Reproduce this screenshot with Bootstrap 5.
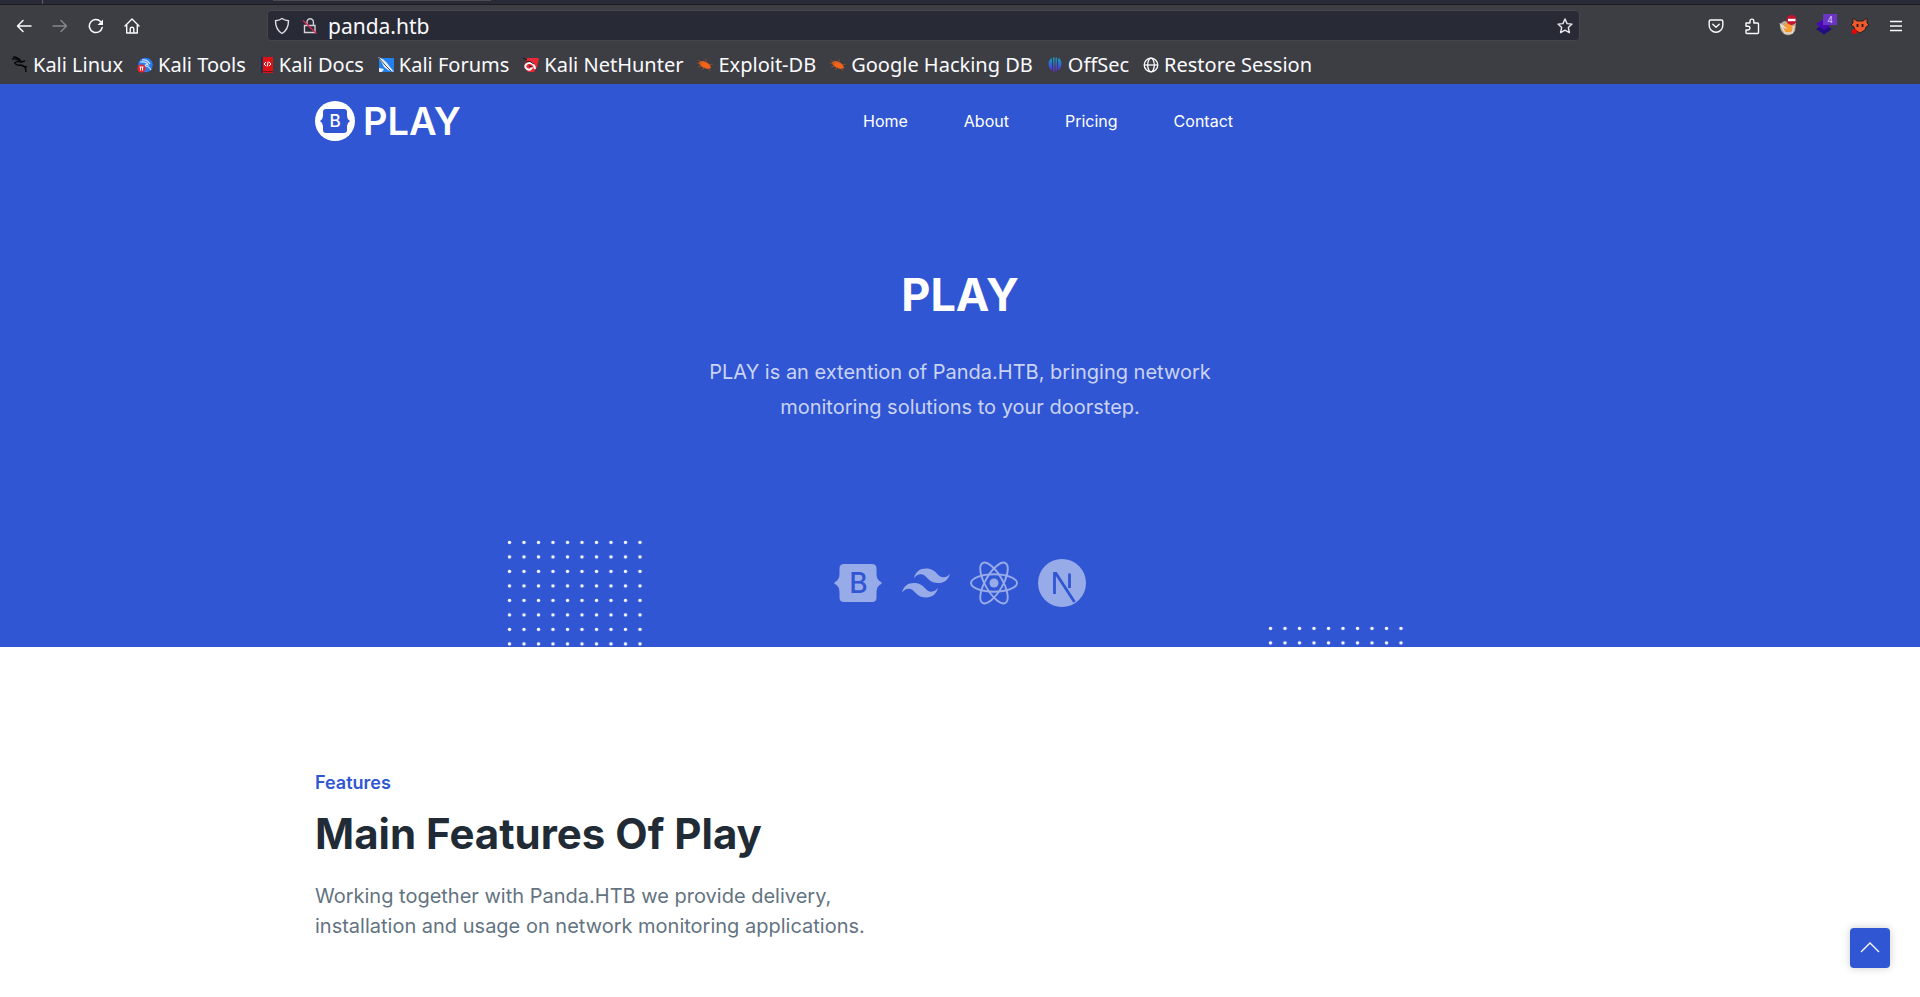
<!DOCTYPE html>
<html lang="en">
<head>
<meta charset="utf-8">
<meta name="viewport" content="width=device-width, initial-scale=1">
<title>Play</title>
<link href="https://cdn.jsdelivr.net/npm/bootstrap@5.3.0/dist/css/bootstrap.min.css" rel="stylesheet">
<style>
:root{--brand:#3056d3;--chrome:#3d3e43;--chrome-dark:#282a36;--ink:#212b36;--muted:#637381}
body{font-family:Inter,sans-serif;color:var(--ink);overflow-x:hidden}
a{text-decoration:none;color:inherit}
svg{display:block;flex:none}
/* browser chrome */
.chrome{background:var(--chrome);height:84px;font-family:"Noto Sans",sans-serif;color:#fbfbfe}
.tab-strip{height:5px;background:var(--chrome-dark);border-bottom:1px solid #1b1c22}
.tab-edge{width:43px;border-right:1px solid #5d5e68}
.tab-active{width:218px;height:1px;margin-left:230px;background:#4a4b52}
.toolbar{height:41px;padding:0 6px}
.tool{width:36px;height:36px;color:#fbfbfe;position:relative}
.tool:disabled{color:#86878b;opacity:1;border:0}
.url-box{margin:0 118px 0 117px;height:31px;background:var(--chrome-dark);border:1px solid #46474d;border-radius:4px;padding:0 6px;gap:12px}
.url-input{background:none;border:0;outline:0;color:#fbfbfe;font-size:21px;line-height:28px;padding:0;min-width:0}
.url-input,.url-box button{margin-left:-2px}
.count{position:absolute;left:16px;top:5px;width:14px;height:11px;background:#6a35c4;color:#e4d8fa;font-size:9px;line-height:11px;text-align:center}
.bookmarks{height:38px;padding:0 10px;gap:14px;font-size:20px;line-height:28px;white-space:nowrap}
.bookmarks a{gap:5px}
/* page */
.container{--bs-gutter-x:30px;max-width:1320px}
.row{--bs-gutter-x:30px}
.hero{background:var(--brand);color:#fff;height:563px;overflow:hidden;position:relative}
.site-nav{height:74px}
.site-nav nav{padding-left:13px}
.site-nav ul{gap:56px;font-size:16px;line-height:24px}
.brand-name{font-size:38px;line-height:40px;font-weight:600}
.hero h1{font-size:45px;line-height:56px;font-weight:700;margin:109px 0 32px}
.hero-text{font-size:20px;line-height:35px;color:rgba(255,255,255,.75);max-width:570px;margin-bottom:134px}
.tech{color:#98abe9;gap:20px}
.dots{position:absolute;color:#fff}
.dots-left{left:calc(50% - 453px);top:456px}
.dots-right{left:calc(50% + 308px);top:542px}
.features{padding-top:122px}
.features .kicker{font-size:18px;line-height:28px;font-weight:600;color:var(--brand);margin-bottom:12px}
.features h2{font-size:42px;line-height:50px;font-weight:700;margin-bottom:22px}
.features p{font-size:20px;line-height:30px;color:var(--muted);max-width:600px}
.to-top{position:fixed;right:30px;bottom:29px;width:40px;height:40px;background:var(--brand);color:#fff;border-radius:4px;box-shadow:0 0 8px rgba(0,0,0,.2)}
</style>
</head>
<body>
<svg width="0" height="0" class="position-absolute" aria-hidden="true">
  <defs>
    <pattern id="dot" width="14.5" height="14.5" patternUnits="userSpaceOnUse"><circle cx="2.5" cy="2.5" r="1.7" fill="#fff"/></pattern>
    <linearGradient id="off" x2="0" y2="1"><stop offset="0" stop-color="#12a3b8"/><stop offset=".6" stop-color="#3a56d8"/><stop offset="1" stop-color="#6a1fc0"/></linearGradient>
    <symbol id="bug" viewBox="0 0 16 16"><path d="M3 4.500l3-.5 4 1.500 3 2.500 1 3-3 1-4-1-3-2-2-2.500z" fill="#f2641a"/><path d="M0 6l5 1M1 10l4-1M5 13l3-3M13 14l-2-3M16 7l-4 1M9 2v4M1 3l5 3" stroke="#a85328" stroke-width=".7"/></symbol>
  </defs>
</svg>
<div class="chrome">
  <div class="tab-strip d-flex"><span class="tab-edge"></span><span class="tab-active"></span></div>
  <div class="toolbar d-flex align-items-center">
    <button class="tool btn p-0 d-flex align-items-center justify-content-center" aria-label="Back"><svg width="16" height="16" fill="none" stroke="currentColor" stroke-width="1.5" stroke-linecap="round" stroke-linejoin="round"><path d="M15 8H1.5M7 2.5L1.5 8 7 13.5"/></svg></button>
    <button class="tool btn p-0 d-flex align-items-center justify-content-center" aria-label="Forward" disabled><svg width="16" height="16" fill="none" stroke="currentColor" stroke-width="1.5" stroke-linecap="round" stroke-linejoin="round"><path d="M1 8h13.500M9 2.500L14.500 8 9 13.500"/></svg></button>
    <button class="tool btn p-0 d-flex align-items-center justify-content-center" aria-label="Reload"><svg width="16" height="16" fill="none" stroke="currentColor" stroke-width="1.5" stroke-linecap="round"><path d="M14.200 9.500A6.500 6.500 0 1 1 12.500 3.500"/><path d="M15 1.500V7H9.500z" fill="currentColor" stroke="none"/></svg></button>
    <button class="tool btn p-0 d-flex align-items-center justify-content-center" aria-label="Home"><svg width="16" height="16" fill="none" stroke="currentColor" stroke-width="1.400" stroke-linecap="round" stroke-linejoin="round"><path d="M1 8l7-7 7 7M2.700 7v8h10.600V7M6.200 15v-4a1.800 1.800 0 0 1 3.600 0v4"/></svg></button>
    <div class="url-box flex-grow-1 d-flex align-items-center">
      <svg width="16" height="18" fill="none" stroke="#e2e2e8" stroke-width="1.400" stroke-linejoin="round"><path d="M8 1.500C6 3 4 3.500 1.500 3.800 1.500 10 3 13.500 8 16.500c5-3 6.500-6.500 6.500-12.700C12 3.500 10 3 8 1.500z"/></svg>
      <svg width="16" height="16" fill="none" stroke="#d2d2d8" stroke-width="1.400"><path d="M2.500 7.500h10.500v7h-10.500zM5 7.500v-3.500a3.200 3.200 0 0 1 6.400 0v3.500"/><path d="M1 2.500l13.500 13" stroke="#e22850" stroke-width="1.300"/></svg>
      <input class="url-input flex-grow-1" type="text" value="panda.htb" aria-label="Address">
      <button class="btn p-0 border-0 text-white" aria-label="Bookmark this page"><svg width="16" height="16" fill="none" stroke="#e8e8ee" stroke-width="1.400" stroke-linejoin="round"><path d="M8 1l2.100 4.600 4.900.5-3.700 3.400 1.100 5.200L8 12.200l-4.400 2.500 1.100-5.200L1 6.100l4.900-.5z"/></svg></button>
    </div>
    <button class="tool btn p-0 d-flex align-items-center justify-content-center" aria-label="Pocket"><svg width="16" height="16" fill="none" stroke="currentColor" stroke-width="1.400" stroke-linecap="round" stroke-linejoin="round"><path d="M2.500 2h11q1.300 0 1.300 1.300V7.500a6.800 6.800 0 0 1-13.600 0V3.300Q1.200 2 2.500 2zM4.800 6.200L8 9.200l3.200-3"/></svg></button>
    <button class="tool btn p-0 d-flex align-items-center justify-content-center" aria-label="Extensions"><svg width="16" height="18" fill="none" stroke="currentColor" stroke-width="1.400" stroke-linejoin="round"><path d="M2 6h4V4a1.900 1.900 0 0 1 3.800 0v2h3.700q1 0 1 1v8.500q0 1-1 1H3q-1 0-1-1v-2.500h2a1.900 1.900 0 0 0 0-3.800H2z"/></svg></button>
    <button class="tool btn p-0 d-flex align-items-center justify-content-center" aria-label="Proxy"><svg width="20" height="22"><path d="M2 9l4-3 12 2-1 8q-3 5-9 4-5-2-6-8z" fill="#b9ab98"/><circle cx="10.500" cy="13" r="5" fill="#f39a32"/><path d="M3 10l5 3 8-1-2 6-7 0z" fill="none" stroke="#e6ddd0" stroke-width="1.500"/><path d="M6 11l4-2 5 3-4 3z" fill="#f59b37"/><circle cx="13.500" cy="5" r="5" fill="#c41230"/><path d="M10 5h7.500" stroke="#fff" stroke-width="2.400"/></svg></button>
    <button class="tool btn p-0 d-flex align-items-center justify-content-center" aria-label="Wappalyzer"><svg width="18" height="18"><path d="M1 12l8-5 8 5-8 5.500z" fill="#230b80"/><path d="M1 7l8-5 8 5-8 6z" fill="#4809b5"/></svg><span class="count">4</span></button>
    <button class="tool btn p-0 d-flex align-items-center justify-content-center" aria-label="FoxyProxy"><svg width="18" height="18"><path d="M2 1l4 3h6l4-3v5l2 2-3 2-1 3-5 3-5-3-1-3-3-2 2-2z" fill="#f0592b" stroke="#262322" stroke-width="1"/><path d="M6.500 7v3M11.500 7v3" stroke="#2a1512" stroke-width="1.800"/><circle cx="3.500" cy="14.500" r="2.600" fill="#e80505"/></svg></button>
    <button class="tool btn p-0 d-flex align-items-center justify-content-center" aria-label="Menu"><svg width="16" height="16" stroke="currentColor" stroke-width="1.400"><path d="M2 3.500h12M2 8h12M2 12.500h12"/></svg></button>
  </div>
  <nav class="bookmarks d-flex align-items-center" aria-label="Bookmarks">
    <a href="#" class="d-flex align-items-center"><svg width="18" height="18" fill="none" stroke="#08080a" stroke-width="1.300"><path d="M2 3q6-1 9 3-5-1-6 1 1 3 5 2 6 0 6 7M3 1q5 0 8 4M4 7l4-2M15 5l-4 1M12 10l5 1"/></svg>Kali Linux</a>
    <a href="#" class="d-flex align-items-center"><svg width="16" height="16"><circle cx="8.500" cy="8" r="7.300" fill="#287bf0"/><path d="M3 5q7-1 8 3-3-1-3 1 4 0 6 4M5 3q5-1 8 4" fill="none" stroke="#cfe2ff" stroke-width="1.200"/><circle cx="4.500" cy="11.500" r="4" fill="#e3272c"/><path d="M2.500 10h4M3.500 10v3.500M5.500 10v3.500" stroke="#fff"/></svg>Kali Tools</a>
    <a href="#" class="d-flex align-items-center"><svg width="14" height="16"><path d="M1 0h12v16H2l-1-1z" fill="#de1118"/><path d="M1 0h1.800v16H1z" fill="#122f59"/><path d="M2 14.500h11" stroke="#761214"/><path d="M6 5L4 7l2 2M9 5l2 2-2 2M8.200 4.500l-1 5" fill="none" stroke="#fff"/></svg>Kali Docs</a>
    <a href="#" class="d-flex align-items-center"><svg width="16" height="16"><path d="M1 1h15v14H1z" fill="#2480ee"/><path d="M0 0q6 2 9 6l3 4 4 5-6-2-4-3-2-4zM1 11l5 1-2 3H1z" fill="#e9eef4"/><path d="M1 1l6 7 6 6" fill="none" stroke="#223048" stroke-width=".8"/></svg>Kali Forums</a>
    <a href="#" class="d-flex align-items-center"><svg width="16" height="16"><path d="M4 1h12l-2 9-3 5H5l-4-5z" fill="#e92737"/><path d="M12 12Q11 5 5 6 0 9 4 12q4 2 5-2" fill="none" stroke="#fff" stroke-width="2"/><path d="M11 7Q7 3 3 5M0 1l4 2M6 9l3 1" fill="none" stroke="#17171a"/></svg>Kali NetHunter</a>
    <a href="#" class="d-flex align-items-center"><svg width="16" height="16"><use href="#bug"/></svg>Exploit-DB</a>
    <a href="#" class="d-flex align-items-center"><svg width="16" height="16"><use href="#bug"/></svg>Google Hacking DB</a>
    <a href="#" class="d-flex align-items-center"><svg width="16" height="16" fill="url(#off)"><path d="M5 1v12.500Q1.500 11 1.500 6.500 2 2 5 1zM6 .5h1.500V15L6 14zM8.500.5H10V14l-1.500 1zM11 1q3.500 1 3.500 5.500 0 4.500-3.500 7z"/></svg>OffSec</a>
    <a href="#" class="d-flex align-items-center"><svg width="16" height="16" fill="none" stroke="#fbfbfe" stroke-width="1.300"><circle cx="8" cy="8" r="6.800"/><ellipse cx="8" cy="8" rx="3.300" ry="6.800"/><path d="M1.500 8h13"/></svg>Restore Session</a>
  </nav>
</div>

<header class="hero">
  <div class="container">
    <div class="row site-nav align-items-center">
      <div class="col-5">
        <a href="#" class="d-flex align-items-center gap-2"><svg width="40" height="40" viewBox="0 0 40 40"><circle cx="20" cy="20" r="20" fill="#fff"/><path d="M11 8h18q3 0 3 3v4q0 3 3 5-3 2-3 5v4q0 3-3 3H11q-3 0-3-3v-4q0-3-3-5 3-2 3-5v-4q0-3 3-3z" fill="#3056d3"/><text x="20" y="26" text-anchor="middle" font-size="17" font-weight="500" fill="#fff">B</text></svg><span class="brand-name">PLAY</span></a>
      </div>
      <nav class="col-7" aria-label="Main">
        <ul class="list-unstyled d-flex mb-0">
          <li><a href="#">Home</a></li><li><a href="#about">About</a></li><li><a href="#pricing">Pricing</a></li><li><a href="#contact">Contact</a></li>
        </ul>
      </nav>
    </div>
    <div class="text-center">
      <h1>PLAY</h1>
      <p class="hero-text mx-auto">PLAY is an extention of Panda.HTB, bringing network<br>monitoring solutions to your doorstep.</p>
    </div>
    <div class="tech d-flex justify-content-center">
      <a href="#" aria-label="Bootstrap"><svg width="48" height="48" viewBox="0 0 48 48"><path d="M10 5h28q4.500 0 4.500 4.500V15q0 6 5 8.300v1.400q-5 2.300-5 8.300v5.500q0 4.500-4.500 4.500H10q-4.500 0-4.500-4.500V33q0-6-5-8.300v-1.400q5-2.300 5-8.300V9.500Q5.500 5 10 5z" fill="currentColor"/><text x="24.500" y="34" text-anchor="middle" font-size="28" font-weight="500" fill="#3056d3">B</text></svg></a>
      <a href="#" aria-label="Tailwind"><svg width="48" height="48" viewBox="0 0 24 24" fill="currentColor"><path d="M12 4.800c-3.200 0-5.200 1.600-6 4.800 1.200-1.600 2.600-2.200 4.200-1.800.913.228 1.565.89 2.288 1.624C13.666 10.618 15.027 12 18 12c3.200 0 5.200-1.600 6-4.800-1.200 1.600-2.600 2.200-4.200 1.800-.913-.228-1.565-.89-2.288-1.624C16.337 6.182 14.976 4.800 12 4.800zM6 12c-3.200 0-5.200 1.600-6 4.800 1.200-1.600 2.600-2.200 4.200-1.800.913.228 1.565.89 2.288 1.624C7.666 17.818 9.027 19.200 12 19.200c3.200 0 5.200-1.600 6-4.800-1.200 1.600-2.600 2.200-4.200 1.800-.913-.228-1.565-.89-2.288-1.624C10.337 13.382 8.976 12 6 12z"/></svg></a>
      <a href="#" aria-label="React"><svg width="48" height="48" viewBox="-24 -24 48 48" fill="none" stroke="currentColor" stroke-width="1.900"><circle r="4.500" fill="currentColor" stroke="none"/><ellipse rx="23" ry="8.700"/><ellipse rx="23" ry="8.700" transform="rotate(60)"/><ellipse rx="23" ry="8.700" transform="rotate(120)"/></svg></a>
      <a href="#" aria-label="Next.js"><svg width="48" height="48" viewBox="0 0 48 48"><circle cx="24" cy="24" r="24" fill="currentColor"/><path d="M16.500 35V14.500h1.500L36.500 43M31.500 14.500V29" fill="none" stroke="#3056d3" stroke-width="2.800"/></svg></a>
    </div>
  </div>
  <svg class="dots dots-left" width="136" height="108" aria-hidden="true"><rect width="136" height="108" fill="url(#dot)"/></svg>
  <svg class="dots dots-right" width="136" height="108" aria-hidden="true"><rect width="136" height="108" fill="url(#dot)"/></svg>
</header>

<main class="features">
  <div class="container">
    <div class="kicker">Features</div>
    <h2>Main Features Of Play</h2>
    <p>Working together with Panda.HTB we provide delivery,<br>installation and usage on network monitoring applications.</p>
  </div>
</main>
<a href="#" class="to-top d-flex align-items-center justify-content-center" aria-label="Back to top"><svg width="20" height="20" fill="none" stroke="currentColor" stroke-width="1.300"><path d="M1 14l9-9 9 9"/></svg></a>
<script src="https://cdn.jsdelivr.net/npm/bootstrap@5.3.0/dist/js/bootstrap.bundle.min.js"></script>
</body>
</html>
